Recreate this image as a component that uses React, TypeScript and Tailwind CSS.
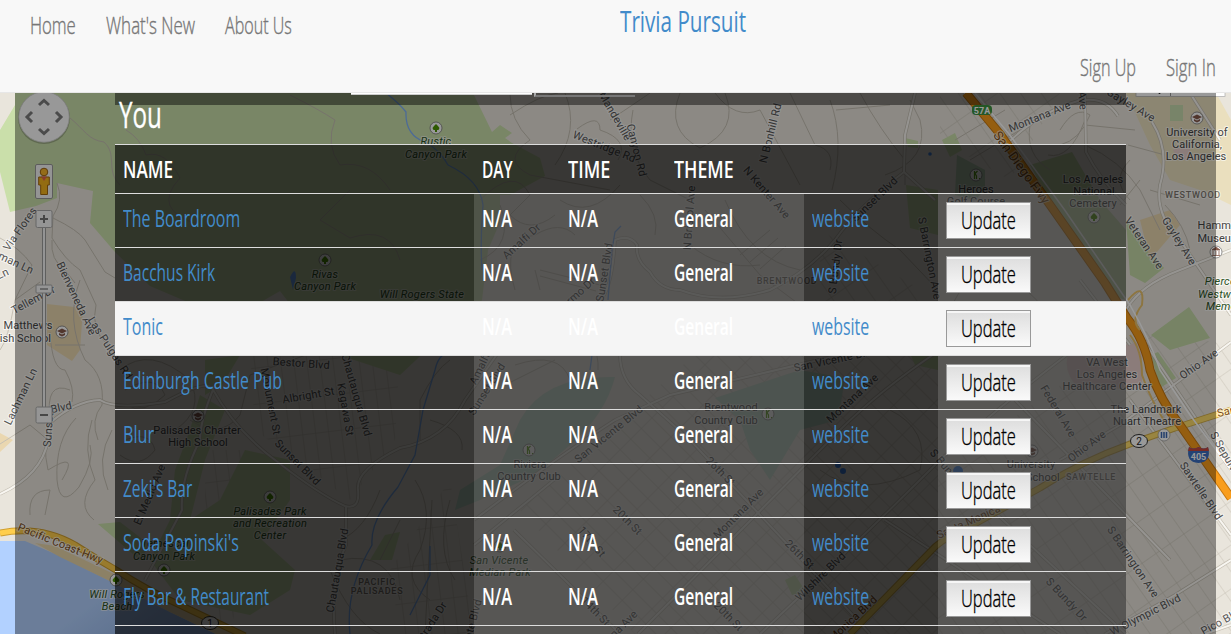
import { useLayoutEffect, useRef, useState } from "react";

/** Single line of condensed type, fitted to a given width. */
function Fit({ text, w, className = "" }: { text: string; w: number; className?: string }) {
  const ref = useRef<HTMLSpanElement>(null);
  const [scale, setScale] = useState(1);
  useLayoutEffect(() => {
    if (ref.current) setScale(w / ref.current.offsetWidth);
  }, [w, text]);
  return (
    <span className="inline-block whitespace-nowrap" style={{ width: w }}>
      <span
        ref={ref}
        className={`inline-block origin-left ${className}`}
        style={{ transform: `scaleX(${scale})` }}
      >
        {text}
      </span>
    </span>
  );
}

type Label = {
  t: string;
  x: number;
  y: number;
  r?: number;
  s?: number;
  kind?: "road" | "park" | "area" | "poi" | "hwy";
};

const labels: Label[] = [
  { t: "Rustic", x: 436, y: 145, kind: "park" },
  { t: "Canyon Park", x: 436, y: 158, kind: "park" },
  { t: "Rivas", x: 325, y: 278, kind: "park" },
  { t: "Canyon Park", x: 325, y: 290, kind: "park" },
  { t: "Will Rogers State", x: 422, y: 298, kind: "park" },
  { t: "Palisades Park", x: 270, y: 515, kind: "park" },
  { t: "and Recreation", x: 270, y: 527, kind: "park" },
  { t: "Center", x: 270, y: 539, kind: "park" },
  { t: "Temescal", x: 165, y: 547, kind: "park" },
  { t: "Canyon Park", x: 164, y: 560, kind: "park" },
  { t: "Will Rogers", x: 117, y: 598, kind: "park" },
  { t: "Beach", x: 117, y: 610, kind: "park" },
  { t: "San Vicente", x: 499, y: 564, kind: "park" },
  { t: "Median Park", x: 500, y: 576, kind: "park" },
  { t: "Pierce Bros", x: 1233, y: 285, kind: "park" },
  { t: "Westwood", x: 1224, y: 298, kind: "park" },
  { t: "Memorial", x: 1229, y: 310, kind: "park" },
  { t: "Matthews", x: 28, y: 329 },
  { t: "Parish School", x: 17, y: 342 },
  { t: "Palisades Charter", x: 197, y: 434 },
  { t: "High School", x: 198, y: 446 },
  { t: "Riviera", x: 530, y: 468 },
  { t: "Country Club", x: 529, y: 480 },
  { t: "Brentwood", x: 731, y: 411 },
  { t: "Country Club", x: 726, y: 424 },
  { t: "Heroes", x: 976, y: 193 },
  { t: "Golf Course", x: 976, y: 205 },
  { t: "Los Angeles", x: 1093, y: 183 },
  { t: "National", x: 1094, y: 195 },
  { t: "Cemetery", x: 1093, y: 207 },
  { t: "University of", x: 1197, y: 136 },
  { t: "California,", x: 1197, y: 148 },
  { t: "Los Angeles", x: 1196, y: 160 },
  { t: "Hammer", x: 1219, y: 229 },
  { t: "Museum", x: 1219, y: 242 },
  { t: "VA West", x: 1107, y: 366 },
  { t: "Los Angeles", x: 1107, y: 378 },
  { t: "Healthcare Center", x: 1107, y: 390 },
  { t: "The Landmark", x: 1146, y: 413 },
  { t: "Nuart Theatre", x: 1147, y: 425 },
  { t: "University", x: 1031, y: 468 },
  { t: "High School", x: 1030, y: 481 },
  { t: "WESTWOOD", x: 1193, y: 198, kind: "area" },
  { t: "BRENTWOOD", x: 787, y: 284, kind: "area" },
  { t: "SAWTELLE", x: 1091, y: 480, kind: "area" },
  { t: "PACIFIC", x: 377, y: 585, kind: "area" },
  { t: "PALISADES", x: 377, y: 594, kind: "area" },
  { t: "Via Flores", x: 23, y: 231, r: -55, kind: "road" },
  { t: "Bachman Ln", x: 3, y: 261, r: 25, kind: "road" },
  { t: "Ln", x: 4, y: 277, r: -25, kind: "road" },
  { t: "Tellem Dr", x: 35, y: 303, r: -28, kind: "road" },
  { t: "Bienveneda Ave", x: 73, y: 300, r: 65, kind: "road" },
  { t: "Lachman Ln", x: 24, y: 398, r: -64, kind: "road" },
  { t: "Blvd", x: 62, y: 411, r: -12, kind: "road" },
  { t: "Sunset", x: 52, y: 430, r: -86, kind: "road" },
  { t: "Las Pulgas Rd", x: 107, y: 350, r: 57, kind: "road" },
  { t: "Bestor Blvd", x: 301, y: 367, r: 4, kind: "road" },
  { t: "Albright St", x: 309, y: 399, r: -10, kind: "road" },
  { t: "Monument St", x: 267, y: 402, r: 79, kind: "road" },
  { t: "Kagawa St", x: 342, y: 410, r: 80, kind: "road" },
  { t: "Chautauqua Blvd", x: 353, y: 396, r: 74, kind: "road" },
  { t: "Sunset Blvd", x: 295, y: 465, r: 45, kind: "road" },
  { t: "El Medio Ave", x: 153, y: 496, r: -67, kind: "road" },
  { t: "Chautauqua Blvd", x: 341, y: 571, r: -80, kind: "road" },
  { t: "Mandeville", x: 612, y: 118, r: 60, kind: "road" },
  { t: "Canyon Rd", x: 633, y: 151, r: 76, kind: "road" },
  { t: "Westridge Rd", x: 603, y: 150, r: 22, kind: "road" },
  { t: "N Bonhill Rd", x: 774, y: 134, r: -76, kind: "road" },
  { t: "N Kenter Ave", x: 764, y: 195, r: 49, kind: "road" },
  { t: "N Bristol Ave", x: 693, y: 218, r: -86, kind: "road" },
  { t: "Amalfi Dr", x: 524, y: 244, r: -42, kind: "road" },
  { t: "Sunset Blvd", x: 608, y: 273, r: -81, kind: "road" },
  { t: "Palermo Dr", x: 575, y: 301, r: -42, kind: "road" },
  { t: "Amalfi Dr", x: 486, y: 364, r: -64, kind: "road" },
  { t: "Sunset Blvd", x: 490, y: 391, r: -58, kind: "road" },
  { t: "San Vicente Blvd", x: 611, y: 437, r: -39, kind: "road" },
  { t: "San Vicente Blvd", x: 836, y: 363, r: -12, kind: "road" },
  { t: "26th St", x: 718, y: 474, r: 45, kind: "road" },
  { t: "Montana Ave", x: 741, y: 516, r: -45, kind: "road" },
  { t: "20th St", x: 625, y: 523, r: 45, kind: "road" },
  { t: "14th St", x: 593, y: 614, r: 45, kind: "road" },
  { t: "17th St", x: 589, y: 544, r: 50, kind: "road" },
  { t: "20th St", x: 726, y: 619, r: 45, kind: "road" },
  { t: "26th St", x: 797, y: 557, r: 45, kind: "road" },
  { t: "Montana Ave", x: 615, y: 638, r: -45, kind: "road" },
  { t: "Entrada Dr", x: 433, y: 627, r: -57, kind: "road" },
  { t: "San Vicente Blvd", x: 471, y: 641, r: -75, kind: "road" },
  { t: "Montana Ave", x: 855, y: 401, r: -43, kind: "road" },
  { t: "Sunset Blvd", x: 877, y: 202, r: -44, kind: "road" },
  { t: "S Bundy Dr", x: 839, y: 267, r: -83, kind: "road" },
  { t: "S Barrington Ave", x: 926, y: 259, r: 79, kind: "road" },
  { t: "Montana Ave", x: 1041, y: 120, r: -22, kind: "road" },
  { t: "Ave", x: 1079, y: 101, r: 84, kind: "road" },
  { t: "Gayley Ave", x: 1129, y: 108, r: 31, kind: "road" },
  { t: "Veteran Ave", x: 1141, y: 245, r: 56, kind: "road" },
  { t: "Gayley Ave", x: 1176, y: 243, r: 58, kind: "road" },
  { t: "Ohio Ave", x: 1201, y: 367, r: -35, kind: "road" },
  { t: "Ohio Ave", x: 1089, y: 449, r: -37, kind: "road" },
  { t: "Federal Ave", x: 1055, y: 413, r: 59, kind: "road" },
  { t: "S Bundy Dr", x: 947, y: 474, r: 50, kind: "road" },
  { t: "Sawtelle Blvd", x: 1198, y: 493, r: 56, kind: "road" },
  { t: "S Sepulveda", x: 1225, y: 461, r: 60, kind: "road" },
  { t: "S Barrington Ave", x: 1130, y: 564, r: 56, kind: "road" },
  { t: "S Bundy Dr", x: 1064, y: 602, r: 47, kind: "road" },
  { t: "W Olympic Blvd", x: 1147, y: 618, r: -27, kind: "road" },
  { t: "Pico Blvd", x: 1224, y: 624, r: -29, kind: "road" },
  { t: "Wilshire Blvd", x: 823, y: 579, r: -44, kind: "road" },
  { t: "Santa Monica", x: 970, y: 525, r: -24, kind: "hwy" },
  { t: "Santa Monica Blvd", x: 844, y: 632, r: -43, kind: "hwy" },
  { t: "Pacific Coast Hwy", x: 59, y: 547, r: 22, kind: "hwy" },
  { t: "San Diego Fwy", x: 1018, y: 170, r: 54, kind: "hwy", s: 13 },
  { t: "Santa", x: 1232, y: 414, r: -12, kind: "hwy" },
];

const labelClass = {
  road: "fill-[#565656] tracking-[0.15px]",
  park: "fill-[#2b5224] italic tracking-[0.2px]",
  area: "fill-[#7d776e] font-medium tracking-[0.7px]",
  poi: "fill-[#444444] tracking-[0.05px]",
  hwy: "fill-[#7c4d19] tracking-[0.1px]",
};

const minorRoads = [
  "M70 118 C85 130 88 140 104 142 C118 155 105 170 120 185",
  "M57 183 Q64 200 53 216 L52 238 Q65 260 80 270 L96 305 Q90 330 108 345",
  "M53 218 Q78 230 85 240 L105 272 L115 278",
  "M52 240 Q50 260 65 270 L75 283",
  "M50 332 Q52 370 65 370 Q75 388 72 402",
  "M80 280 Q65 320 85 360 Q105 375 102 405 Q90 420 98 440",
  "M55 345 L85 345 M70 390 Q45 380 50 420 Q42 445 48 470 Q80 450 62 480",
  "M15 300 L40 282 M0 238 Q20 248 32 265 L15 300 Q8 340 0 350",
  "M76 418 Q55 440 57 480 Q60 510 79 487 Q95 460 90 445",
  "M92 420 Q82 450 95 480 Q75 505 94 520 M112 430 Q95 460 108 490",
  "M30 515 Q28 490 50 490 L45 515 M0 444 L30 425 L48 440",
  "M126 130 Q140 138 146 155 Q166 150 180 178 Q150 210 200 225",
  "M290 95 Q320 110 335 120 Q325 145 340 165 Q370 160 390 190",
  "M350 190 L320 220 L350 238 Q390 225 400 260",
  "M120 370 Q150 345 190 380 Q205 410 175 430",
  "M125 390 Q155 372 165 395 Q145 415 125 405",
  "M125 440 Q150 430 155 450 Q140 470 120 455",
  "M190 420 Q220 440 240 415 L250 375 L320 350",
  "M510 94 Q510 120 530 140 Q500 160 530 175 L610 190",
  "M510 115 Q540 95 558 93 M565 93 Q580 130 555 165",
  "M577 129 Q600 112 600 130 Q630 140 618 160",
  "M610 120 Q640 100 650 93 M633 110 Q625 150 650 180 L690 200",
  "M680 93 Q665 130 700 148 Q740 130 725 93",
  "M715 93 Q735 120 760 110 L800 185 M790 93 L815 145 Q835 150 830 170",
  "M480 200 Q515 165 530 195 L510 215 Q530 235 555 215",
  "M515 290 Q500 240 535 235 Q560 220 575 235 M540 270 L600 285 M540 276 L596 291 M535 270 L540 290",
  "M500 205 Q515 245 480 260 M560 200 Q590 220 620 185",
  "M705 210 L760 275 L800 305 M725 200 Q750 260 800 270 M640 195 Q660 215 655 235",
  "M690 245 Q720 270 760 265 M740 255 L770 230 M750 262 L778 238 M760 269 L786 246",
  "M505 385 L555 360 M515 365 Q560 350 570 380 M570 330 Q600 340 598 370",
  "M830 100 Q845 140 832 190 M836 110 L890 105 M860 93 Q880 130 905 160 L905 185",
  "M885 175 Q930 160 920 120 L910 100 M840 200 Q870 230 900 250 L938 290",
  "M955 140 L1005 110 M970 160 L1020 130 M1030 125 Q1025 155 1050 170",
  "M1060 130 Q1075 105 1090 115 Q1080 140 1060 145 M1085 120 Q1070 160 1048 155",
  "M1085 125 L1135 130 M1085 145 Q1120 160 1140 190 L1160 230",
  "M1128 145 L1165 155 M1140 180 L1120 205 M1150 190 L1200 205",
  "M1165 205 Q1185 225 1190 250 M1130 160 Q1110 180 1130 200",
  "M420 440 L420 400 Q435 370 450 360 M430 420 Q465 430 462 450",
  "M415 480 Q435 510 420 550 Q400 580 430 600 M450 500 Q435 550 455 580",
  "M380 490 Q365 530 340 540 M400 520 L380 560 M432 500 L425 634",
  "M340 560 Q390 550 400 600 M330 570 Q350 620 380 634",
  "M952 305 Q975 260 1005 275 Q1030 290 1045 310 M945 330 Q985 310 1030 340",
  "M820 470 Q860 500 920 470 Q930 430 890 410",
];

const arterials = [
  "M1118 116 Q1105 95 1078 101 Q1040 112 1010 141 Q960 93 965 93",
  "M915 93 L905 135 L904 172 L935 200 M904 172 Q860 205 835 240 Q810 270 770 290 Q720 305 680 290 Q660 290 650 272 Q635 260 637 245 Q630 234 615 240 Q612 290 600 300",
  "M620 355 Q620 380 640 395 L690 440 L830 590 L870 634",
  "M474 520 Q560 455 615 420 L670 395 L840 355",
  "M514 530 L620 634 M474 545 L560 475",
  "M638 634 L840 430 Q880 390 940 350",
  "M760 634 Q850 550 940 460 Q1000 405 1080 345",
  "M0 494 Q42 475 48 440 L50 423 Q75 401 100 400 Q115 410 165 402 Q205 380 212 388 Q235 430 275 460 Q320 495 345 506 Q360 510 358 490 Q355 470 400 448 Q445 440 465 400 L500 350",
  "M215 385 Q200 420 200 440 Q180 480 182 510 L145 580",
  "M346 506 L346 545 Q330 580 335 634",
  "M1126 310 Q1140 285 1180 270 L1231 250 M1190 93 L1220 140",
  "M1152 122 Q1170 150 1160 185 Q1155 215 1180 240 L1231 315",
  "M1126 315 L1231 470 M1080 280 L1130 345 M1231 342 L1120 425 L1060 460",
  "M1231 560 L1175 595 L1105 634 M1130 400 L1231 535",
  "M1231 625 L1205 634 M1085 93 L1086 152 Q1100 180 1126 205",
  "M885 520 L1060 634 M960 480 L1126 634 M1015 400 L1170 560",
];

function Tree({ x, y }: { x: number; y: number }) {
  return (
    <g transform={`translate(${x} ${y})`}>
      <circle r="6" fill="#fff" stroke="#777" strokeWidth=".8" />
      <path d="M0 -4 L2 -2 L3.5 0 L2.5 2 H1 V4 H-1 V2 H-2.5 L-3.5 0 L-2 -2 Z" fill="#4d9500" />
    </g>
  );
}

function School({ x, y }: { x: number; y: number }) {
  return (
    <g transform={`translate(${x} ${y})`}>
      <circle r="6" fill="#fff" stroke="#777" strokeWidth=".8" />
      <path d="M-5 -1 L0 -3.5 L5 -1 L0 1.5 Z M-3 1 L0 2.5 L3 1 V3 L0 4.4 L-3 3 Z" fill="#875b4b" />
    </g>
  );
}

function Golf({ x, y }: { x: number; y: number }) {
  return (
    <g transform={`translate(${x} ${y})`}>
      <circle r="6" fill="#fff" stroke="#777" strokeWidth=".8" />
      <path d="M-1.5 -4 V4 M1.5 -4 L-1 -1.5 L.5 1 V4 M3 3.5 H4" stroke="#5b9f13" strokeWidth="1.2" fill="none" />
    </g>
  );
}

function MapControls() {
  return (
    <g>
      <circle cx="44" cy="118" r="26" fill="#000" opacity=".22" />
      <circle cx="44" cy="117" r="25.2" fill="#fdfdfd" stroke="#d8d8d8" strokeWidth=".8" />
      <path
        d="M39 105 L44 100.5 L49 105 M39 129 L44 133.5 L49 129 M32 112 L27 117 L32 122 M56 112 L61 117 L56 122"
        fill="none"
        stroke="#7d7d7d"
        strokeWidth="3"
      />
      <rect x="35.5" y="164.5" width="17" height="34" rx="1.5" fill="#f7f7f7" stroke="#9a9a9a" />
      <circle cx="44" cy="172" r="3.8" fill="#f7b52a" stroke="#9a6115" />
      <path
        d="M38.7 177 H49.3 V185 H47.5 V194.5 H40.7 V185 H38.7 Z"
        fill="#f5b51d"
        stroke="#a46a10"
      />
      <path d="M41 176.5 H47 L44 181 Z" fill="#e7644a" />
      <rect x="42.5" y="227" width="3" height="181" fill="#f7f7f7" stroke="#969696" strokeWidth=".9" />
      <rect x="36" y="210.5" width="16" height="17" rx="1.5" fill="#f9f9f9" stroke="#aaa" />
      <path d="M40 219 H48 M44 215 V223" stroke="#777" strokeWidth="2" />
      <rect x="36" y="285" width="16" height="8" rx="1" fill="#f9f9f9" stroke="#aaa" />
      <path d="M40 289 H48" stroke="#777" strokeWidth="1.2" />
      <rect x="36" y="407" width="16" height="16" rx="1.5" fill="#f9f9f9" stroke="#aaa" />
      <path d="M40 415 H48" stroke="#777" strokeWidth="2" />
      <rect x="1136" y="88" width="89" height="8.5" fill="#fff" stroke="#aaa" strokeWidth=".7" />
      <path d="M1170.5 88 V96" stroke="#999" />
      <circle cx="1159.5" cy="93" r="1" fill="#222" />
    </g>
  );
}

function CityMap() {
  return (
    <svg
      className="col-start-1 row-start-1 block h-[541px] w-[1231px] font-[Roboto,'Liberation_Sans',sans-serif] font-normal"
      viewBox="0 93 1231 541"
    >
      <defs>
        <pattern id="blocksA" width="15" height="27" patternUnits="userSpaceOnUse" patternTransform="rotate(-45)">
          <path d="M0 0 H15 M0 0 V27" stroke="#c9c3b8" fill="none" />
        </pattern>
        <pattern id="blocksB" width="17" height="36" patternUnits="userSpaceOnUse" patternTransform="rotate(-35)">
          <path d="M0 0 H17 M0 0 V36" stroke="#c9c3b8" fill="none" />
        </pattern>
        <pattern id="blocksC" width="13" height="36" patternUnits="userSpaceOnUse" patternTransform="rotate(-7)">
          <path d="M0 0 H13 M0 0 V36" stroke="#c9c3b8" fill="none" />
        </pattern>
        <linearGradient id="sea" x1="0" y1="0" x2="1" y2=".6">
          <stop offset="0" stopColor="#b2d1ff" />
          <stop offset=".6" stopColor="#b2d1ff" />
          <stop offset="1" stopColor="#94b5ea" />
        </linearGradient>
      </defs>
      <rect x="0" y="93" width="1231" height="541" fill="#e9e5dc" />

      <path d="M520 510 L700 350 L938 345 L938 634 H635 Z" fill="url(#blocksA)" />
      <path d="M940 93 H1060 L1010 180 L940 140 Z M938 470 L1140 330 L1231 345 V634 H938 Z" fill="url(#blocksB)" />
      <path d="M820 230 L938 300 V345 L820 355 Z" fill="url(#blocksB)" />
      <path d="M250 350 L400 350 L395 440 L350 500 L255 430 Z" fill="url(#blocksC)" />
      <path d="M205 450 L250 450 L260 490 L230 634 L205 600 Z M390 570 L450 480 L474 634 H400 Z" fill="url(#blocksC)" />

      <path
        d="M15 93 L15 105 L0 130 V172 L10 212 L36 206 L57 198 L57 183 L93 191 L90 223 L115 252 L150 286 L230 320 L280 291 L310 330 L330 352 L400 375 L432 345 L474 312 L482 300 L488 250 L500 222 L500 195 L510 195 L545 176 L540 158 L512 143 L505 138 L512 133 L500 125 L492 132 L473 93 Z"
        fill="#cadfaa"
      />
      <path d="M0 93 H15 V104 L0 129 Z" fill="#e9e5dc" />
      <path
        d="M200 395 L225 410 L205 460 L190 520 L220 500 L245 450 L290 460 L290 500 L262 540 L295 570 L290 590 L250 615 L180 600 L150 560 L170 520 L175 470 L190 430 Z"
        fill="#cadfaa"
      />
      <path d="M205 360 L240 355 L222 385 L205 395 Z M385 535 L400 532 L392 560 L370 560 Z M98 524 L120 522 L150 545 L140 560 Z" fill="#cadfaa" />
      <path d="M905 138 L918 141 L918 148 L908 147 Z M942 140 L955 133 L962 150 L950 157 Z" fill="#cadfaa" />
      <path d="M1030 165 L1072 152 L1100 200 L1126 230 V300 L1110 295 L1070 240 Z" fill="#c1d5a6" />
      <path d="M957 155 L985 170 L985 190 L975 200 L955 195 Z" fill="#b8d1b5" />
      <path d="M1126 220 L1164 268 L1145 283 L1130 275 Z M1151 335 L1189 307 L1210 338 L1170 350 Z M1151 355 L1158 352 L1176 378 L1160 388 Z" fill="#c6dba8" />
      <path d="M906 185 L938 190 V235 L910 228 Z M900 330 L938 350 V370 L915 365 Z" fill="#cadfaa" />
      <path d="M520 420 Q545 375 615 377 Q605 415 570 445 L535 475 L480 500 L455 510 L460 490 L500 465 Z" fill="#c2ddcb" />
      <path d="M715 398 L800 370 L845 378 L838 420 L800 430 L770 480 L750 450 L740 420 Z" fill="#c2ddcb" />
      <path d="M785 580 L795 575 L806 592 L792 595 Z" fill="#cadfaa" />
      <path d="M1126 93 H1216 L1231 120 V205 L1200 190 L1170 180 L1150 145 Z" fill="#eadfbe" />
      <path d="M1140 220 L1170 210 L1180 225 L1150 260 Z M47 304 L83 308 L80 350 L72 361 L47 345 Z M0 433 L13 440 L0 452 Z" fill="#ead7b0" />
      <path d="M1070 350 Q1090 335 1105 348 L1142 342 L1142 388 L1080 390 Q1060 370 1070 350 Z M1173 150 L1190 143 V160 H1178 Z" fill="#e8cfcc" />
      <path d="M1170 105 H1183 V121 H1170 Z" fill="#c8ddb0" />

      <g fill="none" stroke="#c6c0b4" strokeWidth="1">
        {minorRoads.map((d) => (
          <path key={d} d={d} />
        ))}
      </g>
      <g fill="none" stroke="#c6c0b4" strokeWidth="3.4">
        {arterials.map((d) => (
          <path key={d} d={d} />
        ))}
      </g>
      <g fill="none" stroke="#f8f6f1" strokeWidth="2">
        {arterials.map((d) => (
          <path key={d} d={d} />
        ))}
      </g>
      <g fill="none" stroke="#7fb2fb" strokeWidth="1.3">
        <path d="M386 93 Q400 104 406 112 Q405 135 425 142 Q440 150 448 165 Q480 180 483 205 Q480 240 482 270" />
        <path d="M470 350 Q440 345 435 370 L423 410 L415 455 L398 487 Q370 520 372 545 Q345 590 350 634 M592 355 L590 370 M430 546 L430 575 L410 615" />
        <path d="M608 300 L612 250 L615 232 L621 226" />
      </g>
      <path d="M290 277 Q296 265 296 278 L293 290 Z" fill="#6fa8ff" />
      <g fill="#4288f0">
        <circle cx="930" cy="154" r="1.8" />
        <circle cx="838" cy="465" r="3" />
        <circle cx="843" cy="471" r="3" />
        <circle cx="958" cy="471" r="5" />
      </g>

      <path d="M0 541 L25 541 L60 556 L116 584 L170 612 L220 636 H0 Z" fill="url(#sea)" />
      <path d="M35 543 L55 546 L116 575 L190 610 L240 634 H216 L170 612 L116 584 L60 557 Z" fill="#ead7aa" />
      <g fill="none" strokeLinejoin="round">
        <path d="M0 533 Q40 525 75 545 Q95 558 116 570 Q150 592 180 605 L245 636" stroke="#cf9e2f" strokeWidth="7" />
        <path d="M0 533 Q40 525 75 545 Q95 558 116 570 Q150 592 180 605 L245 636" stroke="#ffce4c" strokeWidth="5" />
        <path d="M850 634 L930 552 Q940 540 960 532 L1040 488 Q1080 462 1130 444 L1175 428 L1231 410" stroke="#d2ad49" strokeWidth="7" />
        <path d="M850 634 L930 552 Q940 540 960 532 L1040 488 Q1080 462 1130 444 L1175 428 L1231 410" stroke="#ffde6b" strokeWidth="5" />
        <path d="M966 93 L1000 134 L1055 212 L1105 283 L1127 318 Q1145 340 1150 370 Q1160 400 1180 425 L1231 498" stroke="#c77810" strokeWidth="9" />
        <path d="M966 93 L1000 134 L1055 212 L1105 283 L1127 318 Q1145 340 1150 370 Q1160 400 1180 425 L1231 498" stroke="#f99d1c" strokeWidth="7" />
        <path d="M1128 300 Q1145 280 1142 305 Q1130 320 1140 330 M1130 335 Q1142 350 1142 375 Q1155 410 1168 425" stroke="#ebc36b" strokeWidth="2" />
        <path d="M975 93 L1009 134 L1064 209 L1130 305 Q1150 340 1160 370 L1190 415 L1231 470" stroke="#fff" strokeWidth="1.5" />
      </g>

      <g fontSize="11" textAnchor="middle" stroke="#fff" strokeOpacity=".6" strokeWidth="2.2" strokeLinejoin="round" className="[paint-order:stroke]">
        {labels.map((l, i) => (
          <text
            key={i}
            x={l.x}
            y={l.y}
            fontSize={l.s ?? (l.kind === "area" ? 9 : 11)}
            transform={l.r ? `rotate(${l.r} ${l.x} ${l.y})` : undefined}
            className={labelClass[l.kind ?? "poi"]}
          >
            {l.t}
          </text>
        ))}
      </g>

      <Tree x={436} y={128} />
      <Tree x={325} y={260} />
      <Tree x={270} y={497} />
      <Tree x={164} y={570} />
      <Tree x={116} y={580} />
      <Tree x={500} y={546} />
      <Tree x={1094} y={217} />
      <School x={62} y={332} />
      <School x={198} y={416} />
      <School x={1197} y={118} />
      <School x={1032} y={451} />
      <Golf x={529} y={450} />
      <Golf x={768} y={414} />
      <Golf x={976} y={175} />
      <circle cx="1216" cy="252" r="6" fill="#fff" stroke="#777" strokeWidth=".8" />
      <path d="M1212 250 L1216 247 L1220 250 Z M1213 251 V255 M1216 251 V255 M1219 251 V255 M1212 255.5 H1220" fill="#875b4b" stroke="#875b4b" strokeWidth=".8" />
      <circle cx="1164" cy="435" r="6" fill="#fff" stroke="#888" strokeWidth=".6" />
      <path d="M1161.5 432 V438 M1164 432 V438 M1166.5 432 V438" stroke="#3b68b5" strokeWidth="1.5" />
      <rect x="972" y="105" width="20" height="10" rx="4" fill="#3d9140" />
      <text x="982" y="113.5" textAnchor="middle" fontSize="9" className="fill-white font-bold">57A</text>
      <ellipse cx="1139" cy="441" rx="8.5" ry="6.5" fill="#fff" stroke="#333" />
      <text x="1139" y="444.5" textAnchor="middle" fontSize="10" className="fill-[#222]">2</text>
      <ellipse cx="210" cy="623" rx="8.5" ry="6.5" fill="#fff" stroke="#333" />
      <text x="210" y="626.5" textAnchor="middle" fontSize="10" className="fill-[#222]">1</text>
      <path d="M1189 447 Q1193 450 1198.5 447 Q1204 450 1208 447 Q1212 462 1198.5 463 Q1185 462 1189 447 Z" fill="#3c6fc2" />
      <path d="M1189 447 Q1193 450 1198.5 447 Q1204 450 1208 447 L1209 451 H1188 Z" fill="#c8483f" />
      <text x="1198.5" y="459.5" textAnchor="middle" fontSize="9" className="fill-white font-bold">405</text>

      <MapControls />
    </svg>
  );
}

const venues: [string, number][] = [
  ["The Boardroom", 117],
  ["Bacchus Kirk", 92],
  ["Tonic", 40],
  ["Edinburgh Castle Pub", 159],
  ["Blur", 31],
  ["Zeki's Bar", 69],
  ["Soda Popinski's", 116],
  ["Fly Bar & Restaurant", 146],
];

const cols = "grid grid-cols-[359px_86px_106px_138px_134px_188px]";

function VenueRow({ name, width, active }: { name: string; width: number; active: boolean }) {
  const dark = active ? "" : "bg-black/60";
  const mid = active ? "" : "bg-[#333333]/60";
  return (
    <div className={`${cols} h-[54px] border-t border-[#dddddd] ${active ? "bg-[#f5f5f5]" : ""}`}>
      <div className={`${dark} pt-[7px] pl-2 text-[#428bca]`}>
        <Fit text={name} w={width} />
      </div>
      <div className={`${mid} pt-[7px] pl-2`}>
        <Fit text="N/A" w={30} className="font-semibold" />
      </div>
      <div className={`${mid} pt-[7px] pl-2`}>
        <Fit text="N/A" w={30} className="font-semibold" />
      </div>
      <div className={`${mid} pt-[7px] pl-2`}>
        <Fit text="General" w={59} className="font-semibold" />
      </div>
      <div className={`${dark} pt-[7px] pl-2 text-[#428bca]`}>
        <Fit text="website" w={57} />
      </div>
      <div className={`${mid} pt-2 pl-2`}>
        <button className="block h-[37px] w-[85px] border border-[#999999] bg-linear-to-b from-[#dddddd] to-[#fafafa] text-left text-black shadow-[inset_0_2px_0_#f6f6f6]">
          <span className="block h-[35px] pb-px pl-[14px] leading-[34px]">
            <Fit text="Update" w={55} className="-mt-px font-light [-webkit-text-stroke:0.4px]" />
          </span>
        </button>
      </div>
    </div>
  );
}

export default function App() {
  return (
    <div className="h-[634px] w-[1231px] overflow-hidden bg-[#e9e5dc] font-['Open_Sans',sans-serif] text-[24px] leading-[34px] font-normal">
      <header className="grid h-[93px] grid-cols-[615px_616px] border-b border-[#e7e7e7] bg-[#f8f8f8] font-light text-[#777777] [-webkit-text-stroke:0.4px]">
        <nav className="flex gap-[30px] pt-2 pl-[30px]">
          <Fit text="Home" w={46} />
          <Fit text="What's New" w={89} />
          <Fit text="About Us" w={67} />
        </nav>
        <div className="flex flex-col justify-between">
          <div className="pt-1 pl-[5px] text-[30px] font-normal text-[#428bca] [-webkit-text-stroke:0px]">
            <Fit text="Trivia Pursuit" w={126} />
          </div>
          <nav className="flex justify-end gap-[30px] pr-[15px] pb-2">
            <Fit text="Sign Up" w={56} />
            <Fit text="Sign In" w={50} />
          </nav>
        </div>
      </header>
      <main className="grid h-[541px] overflow-hidden">
        <CityMap />
        <div className="col-start-1 row-start-1 mx-[15px] h-[541px] overflow-hidden bg-black/40 px-[100px]">
          <div className="w-[1011px] text-white">
            <div className="flex h-3 items-start bg-black/45 pl-[236px]">
              <div className="h-[2px] w-[181px] border-b border-[#cccccc] bg-white" />
              <div className="ml-[2px] h-[4px] w-[101px] border-b-2 border-l-2 border-b-[#777777] border-l-[#aaaaaa]" />
            </div>
            <h2 className="h-[39px] pl-1 text-[36px] leading-5">
              <Fit text="You" w={43} className="font-medium [-webkit-text-stroke:0.3px]" />
            </h2>
            <div className={`${cols} h-[49px] border-t border-[#dddddd] bg-black/60 pt-[7px]`}>
              <div className="pl-2"><Fit text="NAME" w={50} className="font-semibold" /></div>
              <div className="pl-2"><Fit text="DAY" w={31} className="font-semibold" /></div>
              <div className="pl-2"><Fit text="TIME" w={42} className="font-semibold" /></div>
              <div className="pl-2"><Fit text="THEME" w={60} className="font-semibold" /></div>
            </div>
            {venues.map(([name, width]) => (
              <VenueRow key={name} name={name} width={width} active={name === "Tonic"} />
            ))}
            <div className={`${cols} h-[54px] border-t border-[#dddddd]`}>
              <div className="bg-black/60" />
              <div className="col-span-3 bg-[#333333]/60" />
              <div className="bg-black/60" />
              <div className="bg-[#333333]/60" />
            </div>
          </div>
        </div>
      </main>
    </div>
  );
}
